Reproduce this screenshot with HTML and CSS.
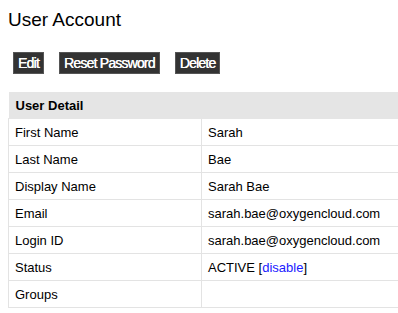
FILE: index.html
```html
<!DOCTYPE html>
<html>
<head>
<meta charset="utf-8">
<link rel="stylesheet" href="styles.css">
</head>
<body>
<h1 class="title">User Account</h1>
<div class="actions">
  <button class="btn">Edit</button>
  <button class="btn">Reset Password</button>
  <button class="btn">Delete</button>
</div>
<table class="detail">
  <thead>
    <tr><th colspan="2">User Detail</th></tr>
  </thead>
  <tbody>
    <tr><td class="label">First Name</td><td class="value">Sarah</td></tr>
    <tr><td class="label">Last Name</td><td class="value">Bae</td></tr>
    <tr><td class="label">Display Name</td><td class="value">Sarah Bae</td></tr>
    <tr><td class="label">Email</td><td class="value">sarah.bae@oxygencloud.com</td></tr>
    <tr><td class="label">Login ID</td><td class="value">sarah.bae@oxygencloud.com</td></tr>
    <tr><td class="label">Status</td><td class="value">ACTIVE [<a href="#" class="link">disable</a>]</td></tr>
    <tr><td class="label">Groups</td><td class="value"></td></tr>
  </tbody>
</table>
</body>
</html>
```
FILE: styles.css
```css
html { overflow: hidden; }
body {
  margin: 8px 0 0 8px;
  font-family: "Liberation Sans", Arial, sans-serif;
  color: #000;
  background: #fff;
}
.title {
  margin: 0;
  padding-top: 1px;
  font-size: 19px;
  font-weight: normal;
  line-height: 22px;
}
.actions {
  display: flex;
  gap: 15px;
  margin: 21px 0 18px 5px;
}
.btn {
  font-family: "Liberation Sans", Arial, sans-serif;
  font-size: 14px;
  letter-spacing: -0.8px;
  text-shadow: 0.3px 0 0 #fff;
  color: #fff;
  background: #333;
  border: 1px solid #555;
  padding: 0 4px 0 4px;
  height: 22px;
  line-height: 20px;
  margin: 0;
}
.detail {
  border-collapse: collapse;
  width: 100%;
  font-size: 13px;
}
.detail th {
  background: #e5e5e5;
  text-align: left;
  font-weight: bold;
  height: 26px;
  padding: 0 6px 0 7px;
  border-bottom: 1px solid #e5e5e5;
}
.detail td {
  height: 26px;
  padding: 0 6px;
  border: 1px solid #e3e3e3;
  border-top: 0;
}
.detail td.value { border-right: 0; }
.detail td.label { width: 180px; }
.link { color: #1a1aff; text-decoration: none; }
```
